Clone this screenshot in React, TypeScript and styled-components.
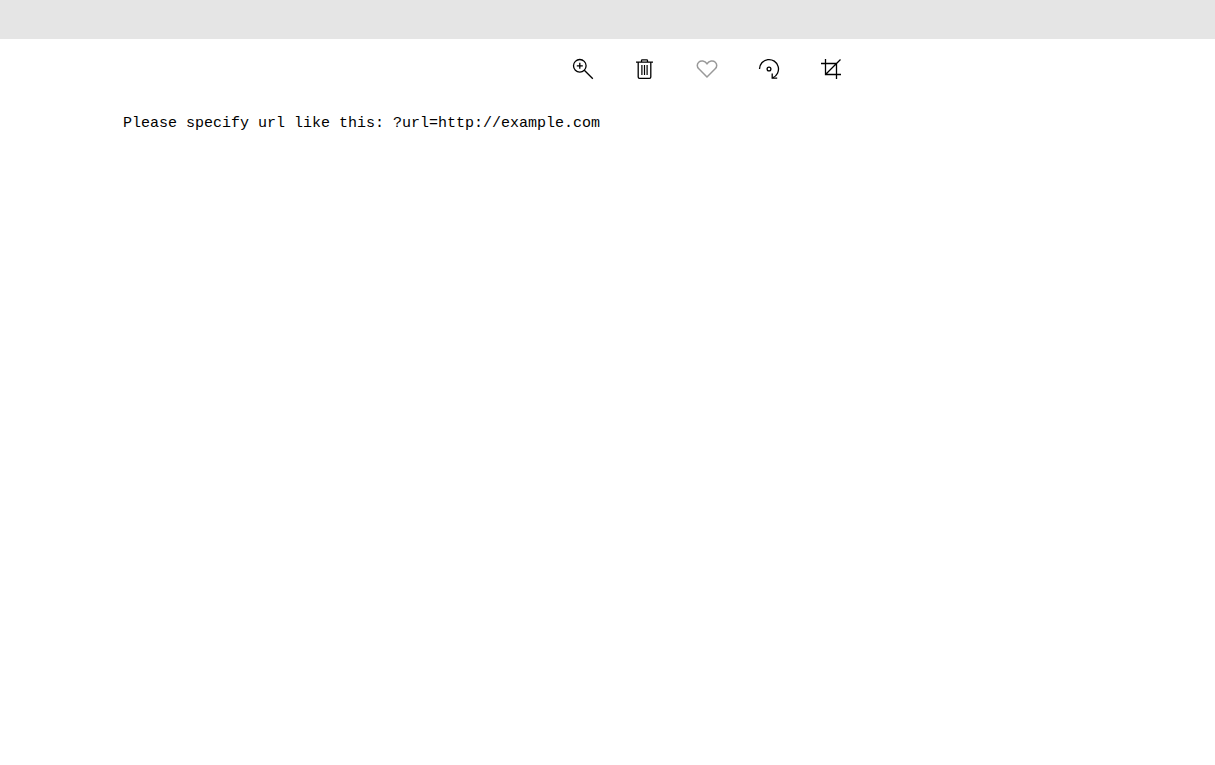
import React from "react";
import styled, { createGlobalStyle } from "styled-components";

const GlobalStyle = createGlobalStyle`
  body {
    margin: 0;
    background: #fff;
    color: #000;
  }
`;

const Page = styled.div`
  display: flex;
  flex-direction: column;
`;

const TopBar = styled.header`
  height: 39px;
  background: #e5e5e5;
`;

const Toolbar = styled.nav`
  display: flex;
  justify-content: center;
  gap: 28px;
  padding: 13px 0 13px 199px;
`;

const IconButton = styled.button<{ $muted?: boolean }>`
  width: 34px;
  height: 34px;
  padding: 0;
  border: 0;
  background: none;
  color: ${(p) => (p.$muted ? "#999" : "#000")};
  cursor: pointer;
`;

const Icon = styled.svg`
  display: block;
  width: 34px;
  height: 34px;
  fill: none;
  stroke: currentColor;
  stroke-width: 1.3;
`;

const Content = styled.main`
  padding: 15px 123px;
`;

const Message = styled.p`
  margin: 0;
  font: 15px/20px "Liberation Mono", monospace;
`;

const actions = [
  {
    label: "Zoom in",
    drawing: (
      <>
        <circle cx="13.8" cy="13.8" r="6.3" />
        <path d="M18.3 18.3 26.8 26.8M13.8 10.8v6M10.8 13.8h6" />
      </>
    ),
  },
  {
    label: "Delete",
    drawing: (
      <>
        <path d="M8 10.2h17M10.2 10.2V25q0 1.3 1.3 1.3h10q1.3 0 1.3-1.3V10.2M13.5 10V8.6q0-.8.8-.8h4.4q.8 0 .8.8V10" />
        <path d="M13.9 13v10M16.5 13v10M19.1 13v10" strokeWidth="1.2" />
      </>
    ),
  },
  {
    label: "Favorite",
    muted: true,
    drawing: (
      <path
        d="M17 25 8.8 16.8C6.8 14.8 6.8 11.9 8.7 10.2c2.3-2 6-1.5 8.3 1.5 2.3-3 6-3.5 8.3-1.5 1.9 1.7 1.9 4.6-.1 6.6Z"
        strokeWidth="1.5"
      />
    ),
  },
  {
    label: "Rotate",
    drawing: (
      <>
        <path d="M7.5 17a9.5 9.5 0 1 1 13.2 8.8" />
        <path d="M20.2 21.5v4.7h5" />
        <circle cx="17" cy="17" r="1.9" />
      </>
    ),
  },
  {
    label: "Crop",
    drawing: <path d="M11.5 7v15.5H27M7 11.5h15.5V27M11.5 22.5 26.5 7.5" />,
  },
];

export default function App() {
  return (
    <Page>
      <GlobalStyle />
      <TopBar />
      <Toolbar aria-label="Image actions">
        {actions.map(({ label, muted, drawing }) => (
          <IconButton key={label} type="button" aria-label={label} $muted={muted}>
            <Icon viewBox="0 0 34 34" aria-hidden="true">
              {drawing}
            </Icon>
          </IconButton>
        ))}
      </Toolbar>
      <Content>
        <Message>Please specify url like this: ?url=http://example.com</Message>
      </Content>
    </Page>
  );
}
